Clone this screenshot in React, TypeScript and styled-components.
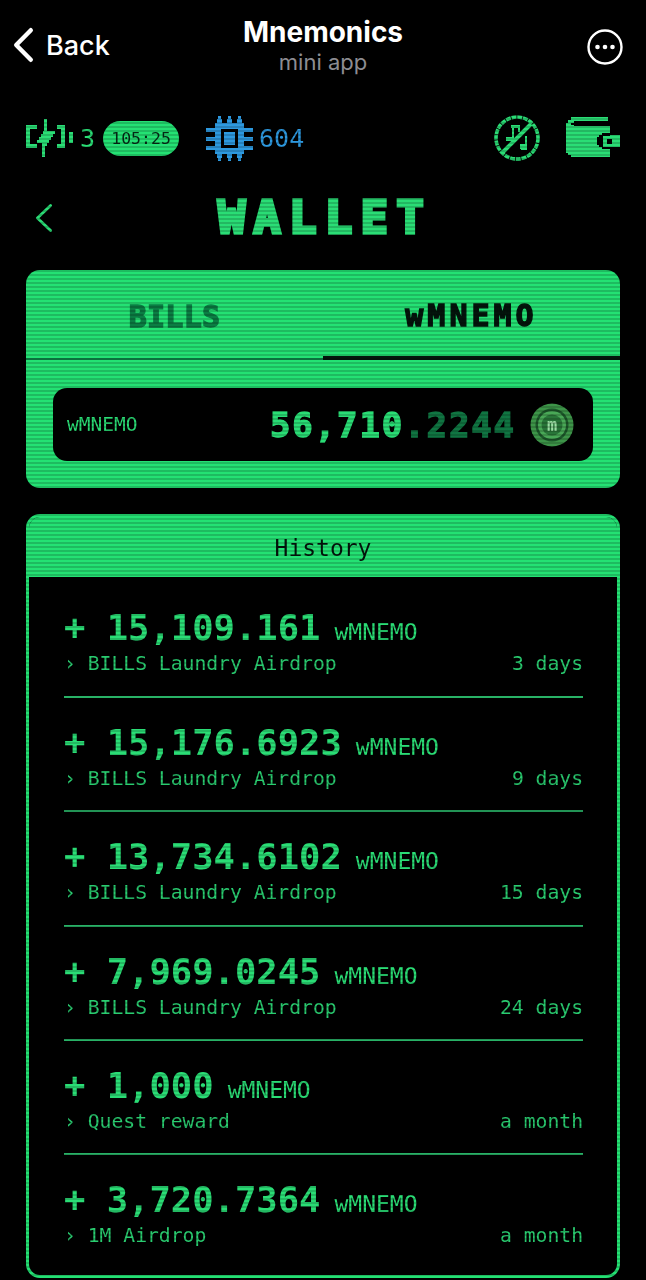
import styled, { createGlobalStyle } from "styled-components";

const GREEN = "#25ea78";
const TEXT_GREEN = "#2ce67a";
const MONO = `"DejaVu Sans Mono", "Liberation Mono", monospace`;
const UI = `"Inter", "Liberation Sans", sans-serif`;

const GlobalStyle = createGlobalStyle`
  html, body {
    margin: 0;
    padding: 0;
    background: #000;
  }
  * {
    box-sizing: border-box;
  }
`;

const Page = styled.div`
  width: 646px;
  height: 1280px;
  overflow: hidden;
  background: #000;
  display: flex;
  flex-direction: column;
`;

/* telegram top bar */
const TopBar = styled.header`
  height: 95px;
  flex: none;
  display: grid;
  grid-template-columns: 1fr auto 1fr;
  align-items: start;
  padding: 16px 13px 0;
  color: #fff;
  font-family: ${UI};
`;

const BackLink = styled.div`
  display: flex;
  align-items: center;
  gap: 12px;
  height: 48px;
  margin-top: 5px;
  font-size: 27px;
  font-weight: 500;
`;

const TitleBlock = styled.div`
  display: flex;
  flex-direction: column;
  align-items: center;
`;

const AppTitle = styled.div`
  font-size: 28px;
  line-height: 33px;
  font-weight: 700;
`;

const AppSub = styled.div`
  font-size: 22px;
  line-height: 27px;
  color: #8d8d92;
`;

const MoreWrap = styled.div`
  justify-self: end;
  margin: 13px 10px 0 0;
  display: flex;
`;

/* everything below the bar sits under the crt lines */
const Screen = styled.main`
  position: relative;
  flex: 1;
  padding: 0 26px;
  filter: blur(0.35px);

  &::after {
    content: "";
    position: absolute;
    inset: 0;
    pointer-events: none;
    background:
      repeating-linear-gradient(0deg, rgba(0, 0, 0, 0.2) 0 2px, rgba(0, 0, 0, 0.04) 2px 4px);
  }
`;

const StatusRow = styled.div`
  height: 86px;
  display: flex;
  align-items: center;
`;

const Count = styled.span<{ $color?: string }>`
  font-family: ${MONO};
  font-size: 25px;
  color: ${(p) => p.$color || TEXT_GREEN};
`;

const Timer = styled.span`
  width: 76px;
  height: 35px;
  margin-left: 8px;
  border-radius: 18px;
  background: ${GREEN};
  color: #052a16;
  font-family: ${MONO};
  font-size: 16.5px;
  display: flex;
  align-items: center;
  justify-content: center;
`;

const ChipWrap = styled.div`
  display: flex;
  align-items: center;
  gap: 6px;
  margin-left: 27px;
`;

const StatusEnd = styled.div`
  margin-left: auto;
  display: flex;
  align-items: center;
  gap: 26px;
`;

const PageHead = styled.div`
  position: relative;
  height: 70px;
  display: flex;
  align-items: center;
  justify-content: center;
`;

const HeadBack = styled.div`
  position: absolute;
  left: 9px;
  top: 22px;
  display: flex;
`;

const PageTitle = styled.h1`
  margin: 3px 0 0 4px;
  font-family: ${MONO};
  font-size: 45px;
  font-weight: 700;
  letter-spacing: 8.6px;
  line-height: 67px;
  color: ${TEXT_GREEN};
  -webkit-text-stroke: 3.6px ${TEXT_GREEN};
`;

const WalletCard = styled.section`
  margin-top: 19px;
  height: 218px;
  border-radius: 14px;
  background: ${GREEN};
  display: flex;
  flex-direction: column;
`;

const Tabs = styled.div`
  height: 90px;
  display: grid;
  grid-template-columns: 1fr 1fr;
`;

const Tab = styled.div<{ $active?: boolean }>`
  display: flex;
  align-items: center;
  justify-content: center;
  padding-top: 4px;
  font-family: ${MONO};
  font-size: 30px;
  font-weight: 700;
  letter-spacing: ${(p) => (p.$active ? "4px" : "0.2px")};
  color: ${(p) => (p.$active ? "#04150c" : "#0b8246")};
  -webkit-text-stroke: 1.4px ${(p) => (p.$active ? "#04150c" : "#0b8246")};
  border-bottom: ${(p) => (p.$active ? "4px solid #04150c" : "2px solid #0c8d4c")};
`;

const Balance = styled.div`
  margin: 28px 27px 0;
  height: 73px;
  border-radius: 14px;
  background: #000;
  display: flex;
  align-items: center;
  padding: 0 19px 0 14px;
`;

const BalanceLabel = styled.span`
  font-family: ${MONO};
  font-size: 19.5px;
  color: ${TEXT_GREEN};
  margin-right: auto;
`;

const BalanceValue = styled.span`
  font-family: ${MONO};
  font-size: 34px;
  font-weight: 700;
  letter-spacing: 1.9px;
  color: ${TEXT_GREEN};
  -webkit-text-stroke: 1.3px currentColor;
  margin-right: 14px;
`;

const Decimals = styled.span`
  color: #117a45;
`;

const HistoryCard = styled.section`
  margin-top: 26px;
  height: 764px;
  border: 3px solid ${GREEN};
  border-radius: 14px;
  overflow: hidden;
  display: flex;
  flex-direction: column;
`;

const HistoryHead = styled.div`
  height: 60px;
  flex: none;
  padding-top: 2px;
  background: ${GREEN};
  color: #04150c;
  font-family: ${MONO};
  font-size: 23px;
  display: flex;
  align-items: center;
  justify-content: center;
`;

const List = styled.ul`
  list-style: none;
  margin: 0;
  padding: 0 34px 0 35px;
  font-family: ${MONO};
`;

const Row = styled.li`
  height: 114.3px;
  padding-top: 24px;
  border-bottom: 2px solid #2ab86a;

  &:first-child {
    height: 121px;
    padding-top: 30px;
  }

  &:last-child {
    border-bottom: none;
  }
`;

const AmountLine = styled.div`
  display: flex;
  align-items: baseline;
  gap: 14px;
  height: 43px;
  line-height: 42px;
  color: ${TEXT_GREEN};
`;

const Amount = styled.span`
  font-size: 35.5px;
  font-weight: 700;
`;

const Unit = styled.span`
  font-size: 23px;
`;

const MetaLine = styled.div`
  display: flex;
  justify-content: space-between;
  font-size: 19.7px;
  line-height: 28px;
  color: #2bd474;
`;

const history = [
  { amount: "15,109.161", label: "BILLS Laundry Airdrop", age: "3 days" },
  { amount: "15,176.6923", label: "BILLS Laundry Airdrop", age: "9 days" },
  { amount: "13,734.6102", label: "BILLS Laundry Airdrop", age: "15 days" },
  { amount: "7,969.0245", label: "BILLS Laundry Airdrop", age: "24 days" },
  { amount: "1,000", label: "Quest reward", age: "a month" },
  { amount: "3,720.7364", label: "1M Airdrop", age: "a month" },
];

function ChevronLeft({ w, h, sw, color }: { w: number; h: number; sw: number; color: string }) {
  return (
    <svg width={w} height={h} viewBox={`0 0 ${w} ${h}`} fill="none">
      <path
        d={`M${w - sw / 2 - 1} ${sw / 2 + 1} L${sw / 2 + 1} ${h / 2} L${w - sw / 2 - 1} ${h - sw / 2 - 1}`}
        stroke={color}
        strokeWidth={sw}
        strokeLinecap="round"
        strokeLinejoin="round"
      />
    </svg>
  );
}

function MoreIcon() {
  return (
    <svg width="36" height="36" viewBox="0 0 36 36">
      <circle cx="18" cy="18" r="16.5" fill="none" stroke="#fff" strokeWidth="2.4" />
      <circle cx="10.5" cy="18" r="2.3" fill="#fff" />
      <circle cx="18" cy="18" r="2.3" fill="#fff" />
      <circle cx="25.5" cy="18" r="2.3" fill="#fff" />
    </svg>
  );
}

function BatteryIcon() {
  return (
    <svg width="48" height="38" viewBox="0 0 48 38" fill={TEXT_GREEN} shapeRendering="crispEdges" style={{ marginRight: 6 }}>
      <path d="M0 6h11v4H4v15h7v4H0z" />
      <path d="M31 6h8v23h-8v-4h4V10h-4z" />
      <path d="M43 13h4v11h-4z" />
      <path d="M18 0h3v12h8v3h-2v3h-2v3h-2v3h-2v3h-2v11h-3V24H11v-3h2v-3h2v-3h2v-3h1z" />
    </svg>
  );
}

function ChipIcon() {
  const c = "#2f9fe8";
  return (
    <svg width="47" height="45" viewBox="0 0 47 45" fill={c} shapeRendering="crispEdges">
      <path fillRule="evenodd" d="M9 7h29v31H9zM15 13v19h17V13z" />
      <path d="M18 16h11v13H18z" />
      {[12, 22, 32].map((x) => (
        <g key={x}>
          <path d={`M${x} 0h3v3h1v5h-5V3h1z`} />
          <path d={`M${x - 1} 37h5v5h-1v3h-3v-3h-1z`} />
        </g>
      ))}
      {[12, 21, 30].map((y) => (
        <g key={y}>
          <path d={`M0 ${y}h10v4H0z`} />
          <path d={`M37 ${y}h10v4H37z`} />
        </g>
      ))}
    </svg>
  );
}

function NoMusicIcon() {
  return (
    <svg width="46" height="46" viewBox="0 0 46 46" fill="none">
      <circle cx="23" cy="23" r="21" stroke={TEXT_GREEN} strokeWidth="3.6" strokeDasharray="5 0.8" />
      <path d="M9 37L37 9" stroke={TEXT_GREEN} strokeWidth="4" />
      <g fill={TEXT_GREEN} shapeRendering="crispEdges">
        <path d="M17 10h7v3h-4v11h-2V13h-1z" />
        <path d="M24 10h2v7h-2z" />
        <path d="M12 22h7v4h-7z" />
        <path d="M31 21h2v9h-2z" />
        <path d="M26 29h7v6h-6v-1h-1z" />
      </g>
    </svg>
  );
}

function WalletIcon() {
  return (
    <svg width="54" height="42" viewBox="0 0 54 42" shapeRendering="crispEdges">
      <path
        fill={TEXT_GREEN}
        d="M5 0h37v4H8v2h-3v2h3v1h36v9h10v12H44v10H5v-2H2v-2H0V6h2V3h3z"
      />
      <path fill="#000" d="M33 18h3v-2h8v16h-8v-2h-3v-2h-2v-8h2z" />
      <path fill={TEXT_GREEN} d="M37 19h17v11H37z" />
      <path fill="#000" d="M41 22h5v5h-5z" />
    </svg>
  );
}

function CoinIcon() {
  return (
    <svg width="44" height="44" viewBox="0 0 44 44">
      <circle cx="22" cy="22" r="21.5" fill="#3f9a4b" />
      <circle cx="22" cy="22" r="16.5" fill="#1d5a2b" />
      <circle cx="22" cy="22" r="14" fill="#4caf5a" />
      <circle cx="22" cy="22" r="10.5" fill="#2a7a3a" />
      <text x="22" y="27.5" textAnchor="middle" fontFamily={MONO} fontWeight="700" fontSize="17" fill="#a2e8aa">
        m
      </text>
    </svg>
  );
}

export default function App() {
  return (
    <Page>
      <GlobalStyle />
      <TopBar>
        <BackLink>
          <ChevronLeft w={21} h={36} sw={4.4} color="#fff" />
          Back
        </BackLink>
        <TitleBlock>
          <AppTitle>Mnemonics</AppTitle>
          <AppSub>mini app</AppSub>
        </TitleBlock>
        <MoreWrap>
          <MoreIcon />
        </MoreWrap>
      </TopBar>
      <Screen>
        <StatusRow>
          <BatteryIcon />
          <Count>3</Count>
          <Timer>105:25</Timer>
          <ChipWrap>
            <ChipIcon />
            <Count $color="#2f9fe8">604</Count>
          </ChipWrap>
          <StatusEnd>
            <NoMusicIcon />
            <WalletIcon />
          </StatusEnd>
        </StatusRow>
        <PageHead>
          <HeadBack>
            <ChevronLeft w={18} h={30} sw={2.8} color={TEXT_GREEN} />
          </HeadBack>
          <PageTitle>WALLET</PageTitle>
        </PageHead>
        <WalletCard>
          <Tabs>
            <Tab>BILLS</Tab>
            <Tab $active>wMNEMO</Tab>
          </Tabs>
          <Balance>
            <BalanceLabel>wMNEMO</BalanceLabel>
            <BalanceValue>
              56,710<Decimals>.2244</Decimals>
            </BalanceValue>
            <CoinIcon />
          </Balance>
        </WalletCard>
        <HistoryCard>
          <HistoryHead>History</HistoryHead>
          <List>
            {history.map((item) => (
              <Row key={item.amount}>
                <AmountLine>
                  <Amount>+ {item.amount}</Amount>
                  <Unit>wMNEMO</Unit>
                </AmountLine>
                <MetaLine>
                  <span>› {item.label}</span>
                  <span>{item.age}</span>
                </MetaLine>
              </Row>
            ))}
          </List>
        </HistoryCard>
      </Screen>
    </Page>
  );
}
